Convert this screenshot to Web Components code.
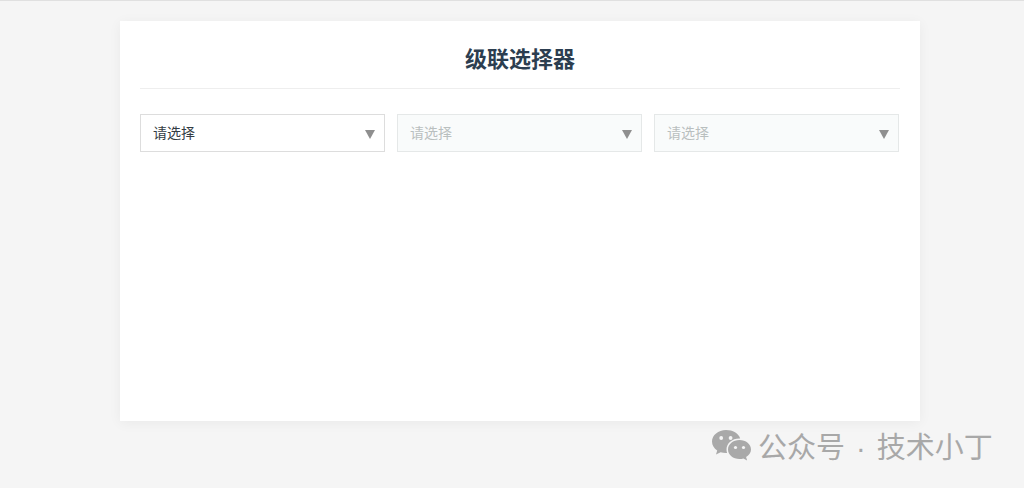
<!DOCTYPE html>
<html lang="zh">
<head>
<meta charset="utf-8">
<title>级联选择器</title>
<style>
    html, body { margin: 0; height: 100%; }
    body {
        background: #f5f5f5;
        border-top: 1px solid #e0e0e0;
        box-sizing: border-box;
        overflow: hidden;
        font-family: "Liberation Sans", "Noto Sans CJK SC", sans-serif;
    }
</style>
</head>
<body>
<cascade-card heading="级联选择器">
    <cascade-select>请选择</cascade-select>
    <cascade-select disabled>请选择</cascade-select>
    <cascade-select disabled>请选择</cascade-select>
</cascade-card>
<water-mark>公众号 · 技术小丁</water-mark>

<script>
(function() {
    "use strict";

    class CascadeCard extends HTMLElement {
        constructor() {
            super();
            this.attachShadow({mode: 'open'}).innerHTML = `
                <style>
                    :host {
                        display: block;
                        box-sizing: border-box;
                        width: 800px;
                        height: 400px;
                        margin: 20px 0 0 120px;
                        padding: 20px;
                        background: #fff;
                        box-shadow: 0 2px 12px rgba(0,0,0,.05);
                    }
                    h1 {
                        margin: 0 0 25px;
                        height: 48px;
                        line-height: 38px;
                        box-sizing: border-box;
                        border-bottom: 1px solid #eee;
                        text-align: center;
                        font-size: 22px;
                        font-weight: 700;
                        color: #2c3e50;
                    }
                    .row { display: flex; gap: 12px; }
                </style>
                <h1></h1>
                <div class="row"><slot></slot></div>
            `;
            this.shadowRoot.querySelector('h1').textContent = this.getAttribute('heading');
        }
    }

    class CascadeSelect extends HTMLElement {
        constructor() {
            super();
            this.attachShadow({mode: 'open'}).innerHTML = `
                <style>
                    :host {
                        display: flex;
                        align-items: center;
                        justify-content: space-between;
                        box-sizing: border-box;
                        width: 245px;
                        height: 38px;
                        padding: 0 9px 2px 12px;
                        border: 1px solid #ddd;
                        background: #fff;
                        color: #333c44;
                        font-size: 14px;
                    }
                    :host([disabled]) {
                        border-color: #e5e8e8;
                        background: #f9fbfb;
                        color: #b9bfbf;
                    }
                    svg { display: block; margin-top: 4px; }
                </style>
                <slot></slot>
                <svg width="10" height="9" viewBox="0 0 10 9"><polygon points="0,0 10,0 5,9" fill="#8f8f8f"/></svg>
            `;
        }
    }

    class WaterMark extends HTMLElement {
        constructor() {
            super();
            this.attachShadow({mode: 'open'}).innerHTML = `
                <style>
                    :host {
                        position: absolute;
                        left: 712px;
                        top: 429px;
                        display: flex;
                        align-items: flex-start;
                        gap: 7px;
                        color: #a8a8a8;
                        font-size: 29px;
                        line-height: 36px;
                        word-spacing: 3px;
                        white-space: nowrap;
                    }
                    svg { display: block; }
                    span { margin-top: 1px; }
                </style>
                <svg width="39" height="33" viewBox="0 0 39 33">
                    <path fill="#a9a9a9" d="M14 1C6.3 1 0 6.2 0 12.6c0 3.7 2 6.8 5.2 9L4 25.6l4.6-2.4c1.7.5 3.4.8 5.4.8h1.1c-.4-1.1-.6-2.3-.6-3.5 0-6.2 5.6-11.1 12.7-11.1h1C26.600 4.300 20.800 1 14 1z"/>
                    <path fill="#a9a9a9" d="M27.500 11C21.100 11 16 15.200 16 20.500S21.100 30 27.500 30c1.400 0 2.700-.2 3.900-.6l3.700 2.100-1-3.400c2.900-1.800 4.900-4.600 4.900-7.600C39 15.200 33.900 11 27.500 11z"/>
                    <circle cx="9.200" cy="9" r="1.900" fill="#f5f5f5"/>
                    <circle cx="18.600" cy="9" r="1.900" fill="#f5f5f5"/>
                    <circle cx="23.500" cy="18.500" r="1.600" fill="#f5f5f5"/>
                    <circle cx="31.500" cy="18.500" r="1.600" fill="#f5f5f5"/>
                </svg>
                <span><slot></slot></span>
            `;
        }
    }

    customElements.define('cascade-card', CascadeCard);
    customElements.define('cascade-select', CascadeSelect);
    customElements.define('water-mark', WaterMark);
})();
</script>
</body>
</html>
